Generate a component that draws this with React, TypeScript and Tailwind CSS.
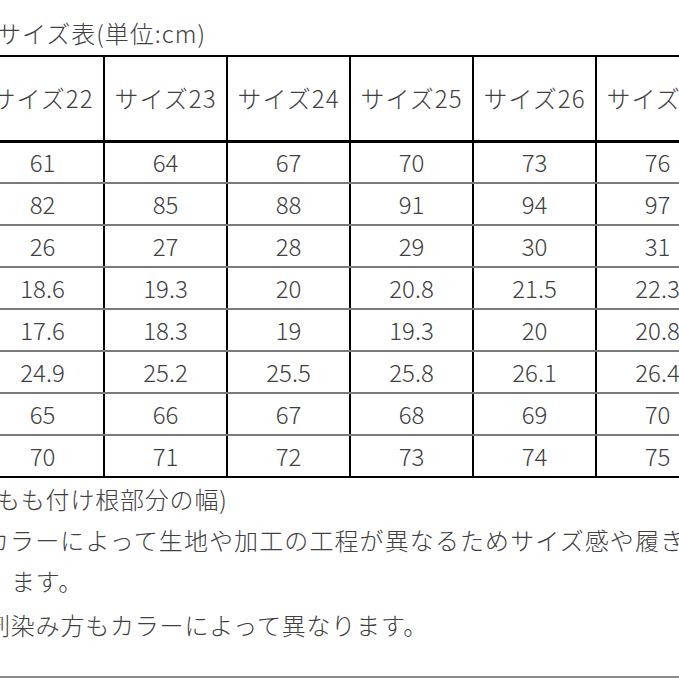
const headers = ["サイズ22", "サイズ23", "サイズ24", "サイズ25", "サイズ26", "サイズ27"];

const rows = [
  ["61", "64", "67", "70", "73", "76"],
  ["82", "85", "88", "91", "94", "97"],
  ["26", "27", "28", "29", "30", "31"],
  ["18.6", "19.3", "20", "20.8", "21.5", "22.3"],
  ["17.6", "18.3", "19", "19.3", "20", "20.8"],
  ["24.9", "25.2", "25.5", "25.8", "26.1", "26.4"],
  ["65", "66", "67", "68", "69", "70"],
  ["70", "71", "72", "73", "74", "75"],
];

const font = { fontFamily: '"Noto Sans CJK JP", "Noto Sans", sans-serif' };

export default function App() {
  return (
    <div
      className="w-[679px] h-[679px] overflow-hidden bg-white text-[#404040] font-light flex flex-col"
      style={font}
    >
      <div className="h-[55px] shrink-0 flex items-end pb-[7px]">
        <p className="-ml-[3px] text-[24px] tracking-[1px] leading-[30px] whitespace-nowrap">サイズ表(単位:cm)</p>
      </div>

      <div className="shrink-0 -ml-[20px]">
        <table className="border-collapse table-fixed w-[740px]">
          <colgroup>
            {headers.map((h) => (
              <col key={h} className="w-[123px]" />
            ))}
          </colgroup>
          <thead>
            <tr>
              {headers.map((h) => (
                <th
                  key={h}
                  className="h-[85px] border-x-2 border-t-2 border-b-[3px] border-black text-[24px] tracking-[1px] font-light text-center whitespace-nowrap p-0"
                >
                  {h}
                </th>
              ))}
            </tr>
          </thead>
          <tbody>
            {rows.map((row, i) => (
              <tr key={i}>
                {row.map((v, j) => (
                  <td
                    key={j}
                    className={`h-[42px] border-x-2 border-x-black text-[24px] leading-none text-center p-0 ${
                      i === rows.length - 1 ? "border-b-2 border-b-black" : "border-b-2 border-b-[#7a7a7a]"
                    }`}
                  >
                    {v}
                  </td>
                ))}
              </tr>
            ))}
          </tbody>
        </table>
      </div>

      <div className="flex-1 flex flex-col text-[24px] tracking-[0.8px] leading-[41px] whitespace-nowrap">
        <p className="-ml-[4px]">もも付け根部分の幅)</p>
        <p className="-ml-[15px] tracking-[1.1px]">カラーによって生地や加工の工程が異なるためサイズ感や履き心地が</p>
        <p className="pl-[11px]">ます。</p>
        <p className="-ml-[14px] mt-[3px]">剤染み方もカラーによって異なります。</p>
      </div>

      <div className="h-[2px] shrink-0 bg-[#8a8a8a] mb-[1px]" />
    </div>
  );
}
